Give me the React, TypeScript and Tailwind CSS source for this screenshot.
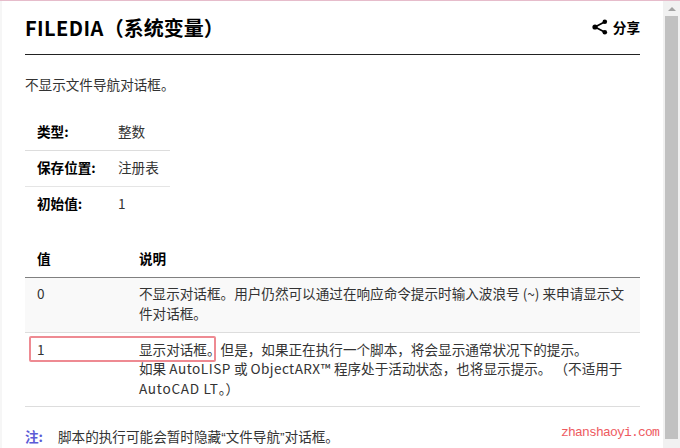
const font = '[font-family:"Noto_Sans_CJK_SC",sans-serif]';

function ShareIcon() {
  return (
    <svg width="16" height="16" viewBox="0 0 16 16" fill="black" stroke="black">
      <path d="M12.5 3 3 8l9.5 5" fill="none" strokeWidth="1.7" />
      <circle cx="12.8" cy="2.8" r="2.3" stroke="none" />
      <circle cx="3" cy="8" r="2.6" stroke="none" />
      <circle cx="12.8" cy="13.2" r="2.3" stroke="none" />
    </svg>
  );
}

function Scrollbar() {
  return (
    <div className="w-[17px] shrink-0 bg-[#f1f1f1] flex flex-col">
      <div className="h-[15px] w-full flex items-center justify-center">
        <div className="w-0 h-0 border-x-[4px] border-x-transparent border-b-[4px] border-b-[#a3a3a3]" />
      </div>
      <div className="flex-1 ml-[2px] w-[13px] bg-[#c1c1c1]" />
      <div className="h-[9px]" />
    </div>
  );
}

export default function App() {
  return (
    <div className={`${font} relative w-[680px] h-[448px] overflow-hidden flex flex-col bg-white text-[#333] text-[13.6px]`}>
      <div className="h-px shrink-0 bg-[#e6bccb]" />
      <div className="flex-1 min-h-0 flex">
        <div className="flex-1 min-w-0 border-l-2 border-[#f6f6f6] pl-[23px] pr-[23px] overflow-hidden">
          <div className="h-[54px] flex items-center justify-between border-b border-[#222]">
            <h1 className="text-[20px] font-bold text-black"><span className="tracking-[0.4px]">FILEDIA</span>（系统变量）</h1>
            <div className="flex items-center gap-[5px] font-bold text-black">
              <ShareIcon />
              分享
            </div>
          </div>

          <p className="mt-[18px] leading-[22px]">不显示文件导航对话框。</p>

          <div className="mt-[20px] w-[145px]">
            <div className="h-[36px] flex items-center border-b border-[#ddd] pl-[12px] pb-[2px]">
              <span className="w-[81px] font-bold text-black">类型:</span>
              <span>整数</span>
            </div>
            <div className="h-[36px] flex items-center border-b border-[#e5e5e5] pl-[12px] pb-[2px]">
              <span className="w-[81px] font-bold text-black">保存位置:</span>
              <span>注册表</span>
            </div>
            <div className="h-[35px] flex items-center pl-[12px] pb-[3px]">
              <span className="w-[81px] font-bold text-black">初始值:</span>
              <span>1</span>
            </div>
          </div>

          <div className="mt-[19px] relative">
            <div className="h-[37px] flex items-center border-b border-[#808080] pl-[12px] pb-[2px] font-bold text-black">
              <span className="w-[102px]">值</span>
              <span>说明</span>
            </div>
            <div className="flex h-[55px] bg-[#f9f9f9] border-b border-[#ddd] pl-[12px] pr-[14px] pt-[6px] leading-[19.7px]">
              <span className="w-[102px] shrink-0">0</span>
              <span>不显示对话框。用户仍然可以通过在响应命令提示时输入波浪号 (~) 来申请显示文件对话框。</span>
            </div>
            <div className="flex h-[74px] border-b border-[#ddd] pl-[12px] pr-[14px] pt-[6.5px] leading-[19.7px]">
              <span className="w-[102px] shrink-0">1</span>
              <span>
                显示对话框。但是，如果正在执行一个脚本，将会显示通常状况下的提示。
                <br />
                如果 <span className="tracking-[0.5px]">AutoLISP</span> 或 <span className="tracking-[0.4px]">ObjectARX™</span> 程序处于活动状态，也将显示提示。 （不适用于 <span className="tracking-[0.7px]">AutoCAD LT</span>。）
              </span>
            </div>
            <div className="absolute left-[4px] top-[95px] w-[187px] h-[26px] border-2 border-[#ee8a92] rounded-[2px]" />
          </div>

          <div className="mt-[18px] flex leading-[22px]">
            <span className="w-[33px] shrink-0 font-bold text-[#5b5bd6]">注:</span>
            <span>脚本的执行可能会暂时隐藏<span className="[font-family:'Liberation_Sans',sans-serif]">“</span>文件导航<span className="[font-family:'Liberation_Sans',sans-serif]">”</span>对话框。</span>
          </div>
        </div>
        <Scrollbar />
      </div>
      <div className="absolute left-[561px] top-[423px] [font-family:'Liberation_Mono',monospace] text-[13px] tracking-[-0.8px] text-[#ee5a60]">zhanshaoyi.com</div>
    </div>
  );
}
